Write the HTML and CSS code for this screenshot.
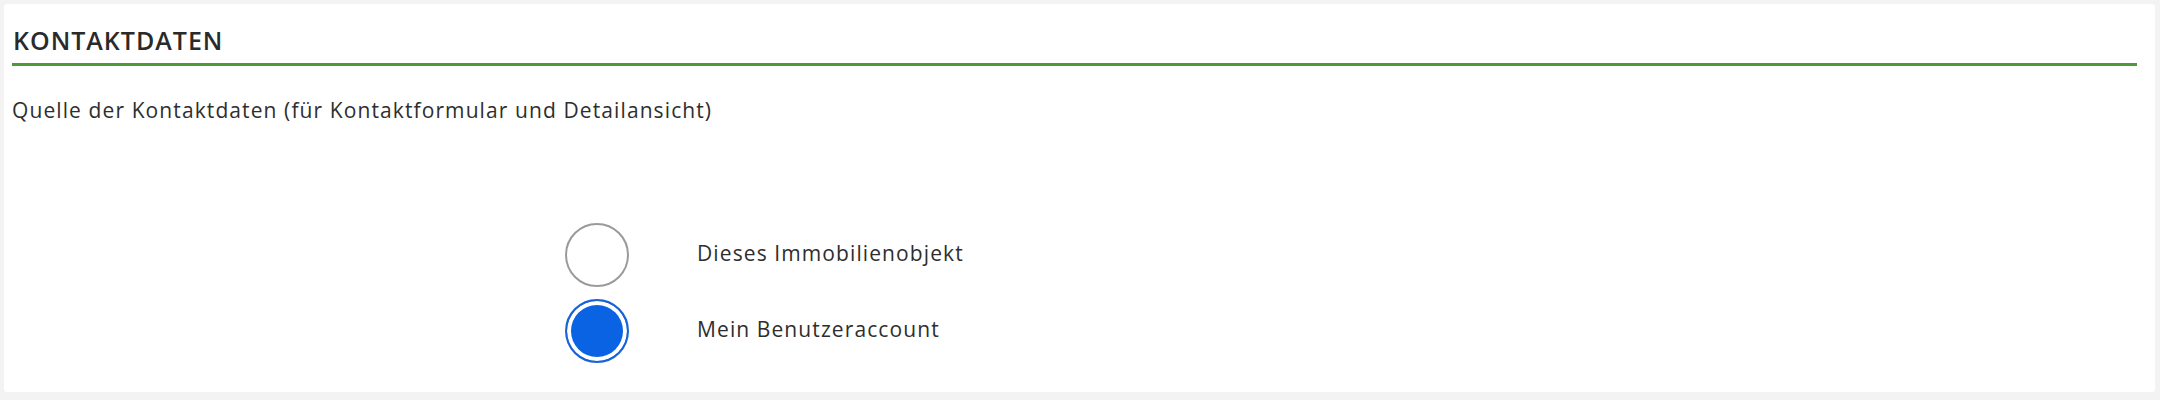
FILE: index.html
```html
<!DOCTYPE html>
<html lang="de">
  <head>
    <meta charset="UTF-8" />
    <meta name="viewport" content="width=device-width, initial-scale=1.0" />
    <title>Kontaktdaten</title>
    <link rel="stylesheet" href="styles.css">
  </head>
  <body>
    <div class="panel">
      <h2 class="section-title">KONTAKTDATEN</h2>
      <p class="section-hint">Quelle der Kontaktdaten (für Kontaktformular und Detailansicht)</p>

      <div class="radio-group">
        <label class="radio-row">
          <input type="radio" name="contact_source" value="object" />
          <span class="radio-text">Dieses Immobilienobjekt</span>
        </label>
        <label class="radio-row">
          <input type="radio" name="contact_source" value="account" checked />
          <span class="radio-text">Mein Benutzeraccount</span>
        </label>
      </div>
    </div>
  </body>
</html>
```

FILE: styles.css
```css
body {
  font-family: "Open Sans", "Liberation Sans", sans-serif;
  background: #f3f3f3;
  margin: 0;
  padding: 4px 5px 8px 4px;
  color: #2b2b2b;
}

.panel {
  background: #fff;
  border-radius: 3px;
  height: 388px;
  box-sizing: border-box;
  padding: 20px 18px 0 8px;
}

.section-title {
  margin: 0;
  padding: 0 0 7px 1px;
  font-size: 25px;
  font-weight: 600;
  letter-spacing: 1px;
  line-height: 32px;
  color: #2a2a2a;
  border-bottom: 3px solid #4c9a3c;
}

.section-hint {
  margin: 30px 0 0 0;
  font-size: 21px;
  letter-spacing: 1.1px;
  line-height: 28px;
  color: #2e2e2e;
}

.radio-group {
  display: flex;
  flex-direction: column;
  gap: 12px;
  margin: 99px 0 0 553px;
}

.radio-row {
  display: flex;
  align-items: center;
  gap: 68px;
  cursor: pointer;
}

.radio-row input {
  appearance: none;
  -webkit-appearance: none;
  margin: 0;
  width: 64px;
  height: 64px;
  border-radius: 50%;
  border: 2px solid #9a9a9a;
  background: #fff;
  box-sizing: border-box;
  cursor: pointer;
}

.radio-row input:checked {
  border: 2px solid #1a63d6;
  background: #0a63e3;
  box-shadow: inset 0 0 0 4px #fff;
}

.radio-text {
  padding-bottom: 5px;
  font-size: 21px;
  letter-spacing: 1.1px;
  color: #2e2e2e;
}
```
